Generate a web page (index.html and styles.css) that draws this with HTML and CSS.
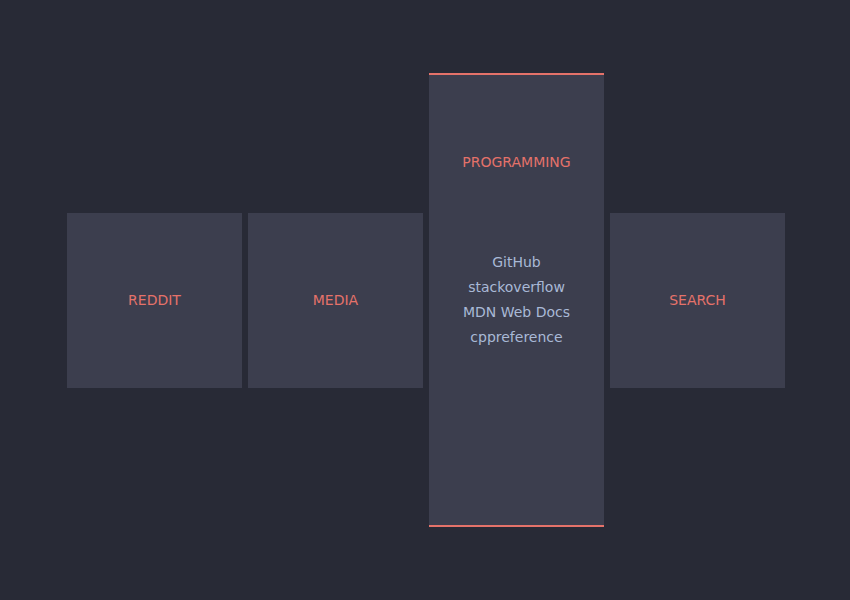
FILE: index.html
```html
<!DOCTYPE html>
<html lang="en">
<head>
    <meta charset="UTF-8">
    <meta name="viewport" content="width=device-width, initial-scale=1.0">
    <title>Startpage</title>
    <link rel="stylesheet" href="styles.css">
</head>
<body>

    <main class="deck">
        <section class="card">
            <h2 class="card-title">REDDIT</h2>
        </section>

        <section class="card">
            <h2 class="card-title">MEDIA</h2>
        </section>

        <!-- Tarjeta abierta -->
        <section class="card card-open">
            <h2 class="card-title">PROGRAMMING</h2>
            <ul class="links">
                <li><a href="#">GitHub</a></li>
                <li><a href="#">stackoverflow</a></li>
                <li><a href="#">MDN Web Docs</a></li>
                <li><a href="#">cppreference</a></li>
            </ul>
        </section>

        <section class="card">
            <h2 class="card-title">SEARCH</h2>
        </section>
    </main>

</body>
</html>
```

FILE: styles.css
```css
/* General */
body {
    font-family: 'DejaVu Sans', sans-serif;
    background-color: #282a36;
    margin: 0;
    padding: 0;
    color: #a9b9d6;
}

.deck {
    height: 600px;
    display: flex;
    align-items: center;
    justify-content: center;
    gap: 6px;
    padding-left: 2px;
    box-sizing: border-box;
}

/* Tarjetas */
.card {
    width: 175px;
    height: 175px;
    background-color: #3c3e4e;
    display: flex;
    align-items: center;
    justify-content: center;
}

.card-title {
    margin: 0;
    font-size: 14px;
    font-weight: normal;
    color: #e5726a;
}

.card-open {
    height: 454px;
    box-sizing: border-box;
    border-top: 2px solid #e5726a;
    border-bottom: 2px solid #e5726a;
    flex-direction: column;
    justify-content: flex-start;
}

.card-open .card-title {
    height: 174px;
    display: flex;
    align-items: center;
}

.links {
    list-style: none;
    margin: 0;
    padding: 1px 0 0;
    text-align: center;
}

.links li {
    font-size: 14px;
    line-height: 25px;
}

.links a {
    color: #a9b9d6;
    text-decoration: none;
}
```
